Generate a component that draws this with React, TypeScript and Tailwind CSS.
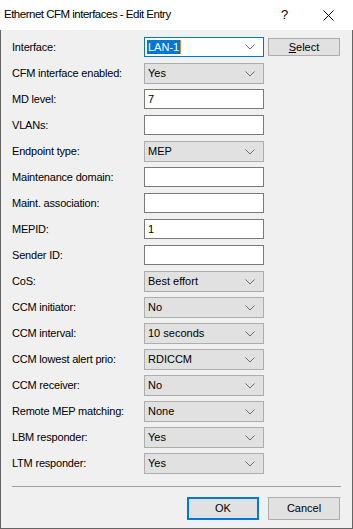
import React from "react";

type Row = {
  label: string;
  kind: "edit" | "combo" | "iface";
  value?: string;
};

const rows: Row[] = [
  { label: "Interface:", kind: "iface", value: "LAN-1" },
  { label: "CFM interface enabled:", kind: "combo", value: "Yes" },
  { label: "MD level:", kind: "edit", value: "7" },
  { label: "VLANs:", kind: "edit" },
  { label: "Endpoint type:", kind: "combo", value: "MEP" },
  { label: "Maintenance domain:", kind: "edit" },
  { label: "Maint. association:", kind: "edit" },
  { label: "MEPID:", kind: "edit", value: "1" },
  { label: "Sender ID:", kind: "edit" },
  { label: "CoS:", kind: "combo", value: "Best effort" },
  { label: "CCM initiator:", kind: "combo", value: "No" },
  { label: "CCM interval:", kind: "combo", value: "10 seconds" },
  { label: "CCM lowest alert prio:", kind: "combo", value: "RDICCM" },
  { label: "CCM receiver:", kind: "combo", value: "No" },
  { label: "Remote MEP matching:", kind: "combo", value: "None" },
  { label: "LBM responder:", kind: "combo", value: "Yes" },
  { label: "LTM responder:", kind: "combo", value: "Yes" },
];

const Chevron = () => (
  <svg width="10" height="6" viewBox="0 0 10 6" className="shrink-0">
    <path d="M0.5 0.5 L5 5 L9.5 0.5" fill="none" stroke="#6d6d6d" strokeWidth="1" />
  </svg>
);

const Field: React.FC<{ row: Row }> = ({ row }) => {
  if (row.kind === "iface") {
    return (
      <div className="flex items-center w-[120px] h-[20px] bg-white border border-[#0078d7] pl-[2px] pr-[8px]">
        <span className="bg-[#0078d7] text-white leading-[14px] px-[1px]">{row.value}</span>
        <span className="w-px h-[14px] bg-[#e08a2a]" />
        <div className="flex-1" />
        <Chevron />
      </div>
    );
  }
  if (row.kind === "combo") {
    return (
      <div className="flex items-center w-[120px] h-[21px] bg-[#e1e1e1] border border-[#adadad] pl-[3px] pr-[8px]">
        <span className="flex-1">{row.value}</span>
        <Chevron />
      </div>
    );
  }
  return (
    <div className="flex items-center w-[120px] h-[20px] bg-white border border-[#7a7a7a] pl-[3px]">
      {row.value}
    </div>
  );
};

const App: React.FC = () => {
  return (
    <div
      className="w-[353px] h-[529px] flex flex-col text-[11px] text-black overflow-hidden"
      style={{ fontFamily: '"Liberation Sans", Arial, sans-serif' }}
    >
      <div className="h-[30px] bg-white flex items-center pl-[4px] shrink-0">
        <span className="text-[11.5px] tracking-[-0.5px] flex-1">Ethernet CFM interfaces - Edit Entry</span>
        <span className="text-[13px] w-[10px] mr-[32px]">?</span>
        <svg width="11" height="11" viewBox="0 0 11 11" className="mr-[19px]">
          <path d="M0.5 0.5 L10.5 10.5 M10.5 0.5 L0.5 10.5" stroke="#000" strokeWidth="1" />
        </svg>
      </div>
      <div className="flex-1 bg-[#f0f0f0] border-x border-b border-[#646464] px-[11px] pt-[7px] flex flex-col">
        <div className="flex flex-col gap-[5px]">
          {rows.map((row) => (
            <div key={row.label} className="flex items-start h-[21px]">
              <div className="w-[132px] h-[20px] flex items-center tracking-[-0.2px]">{row.label}</div>
              <Field row={row} />
              {row.kind === "iface" && (
                <button className="ml-[4px] w-[72px] h-[18px] mt-[1px] bg-[#e1e1e1] border border-[#adadad] flex items-center justify-center">
                  <span>
                    <span className="underline">S</span>elect
                  </span>
                </button>
              )}
            </div>
          ))}
        </div>
        <div className="mt-[12px] h-px bg-[#a0a0a0]" />
        <div className="mt-[10px] flex justify-end gap-[9px] pr-[1px]">
          <button className="w-[72px] h-[23px] bg-[#e1e1e1] border-2 border-[#0078d7] flex items-center justify-center">
            OK
          </button>
          <button className="w-[72px] h-[23px] bg-[#e1e1e1] border border-[#adadad] flex items-center justify-center">
            Cancel
          </button>
        </div>
      </div>
    </div>
  );
};

export default App;
